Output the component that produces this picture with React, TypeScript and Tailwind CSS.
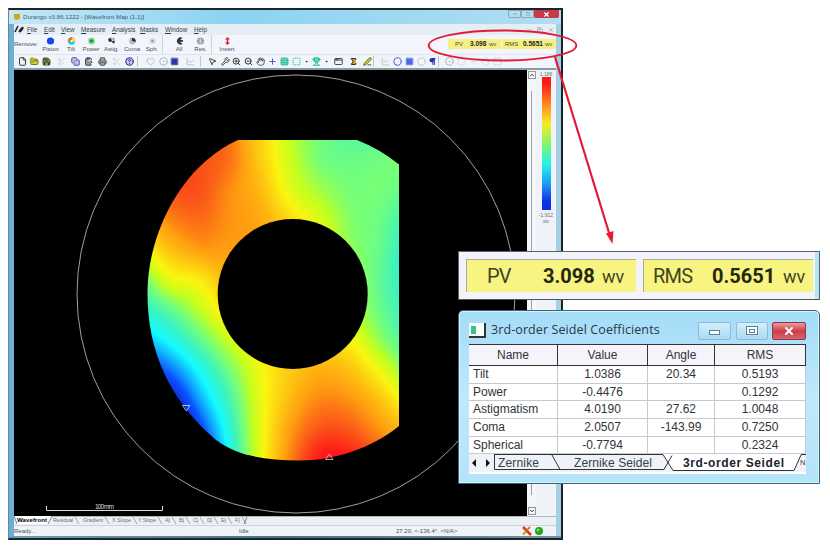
import React from "react";
import {
  File, FolderOpen, Save, Scissors, Copy, ClipboardPaste, Printer, HelpCircle, Circle, Square,
  MousePointer2, Wrench, ZoomIn, ZoomOut, Hand, Plus, Table, SquareDashed, Dot, AppWindow,
  Sigma, PenLine, Heart, Pilcrow, ChevronDown, Trophy, ChartLine, X, Minus, CircleDot,
} from "lucide-react";

const FIELD = [
  [5.6, 5.6, 5.6, 5.3, 4.4, 3.5, 3.0, 2.7, 2.8, 3.1],
  [5.6, 5.6, 5.6, 5.35, 4.5, 3.6, 3.0, 2.9, 2.95, 3.1],
  [5.5, 5.6, 5.6, 5.15, 4.7, 3.8, 3.3, 3.0, 3.0, 2.8],
  [4.7, 5.2, 5.4, 5.1, 4.9, 4.3, 3.7, 3.1, 2.9, 2.5],
  [3.9, 4.6, 5.0, 5.0, 5.0, 4.4, 3.9, 3.2, 2.85, 2.3],
  [2.9, 3.8, 4.1, 4.8, 5.0, 4.5, 4.0, 3.4, 2.8, 2.3],
  [2.3, 2.8, 3.5, 4.3, 4.8, 4.5, 4.0, 3.5, 2.9, 2.4],
  [1.6, 2.1, 2.8, 3.6, 4.2, 4.4, 4.3, 4.0, 3.2, 2.6],
  [0.5, 1.2, 2.1, 3.0, 3.9, 4.5, 4.8, 4.6, 3.9, 3.0],
  [-0.8, 0.1, 1.5, 2.6, 3.8, 4.7, 5.2, 5.1, 4.6, 3.8],
  [-2, -1, 0.8, 2.3, 3.8, 5.0, 5.6, 5.55, 5.1, 4.6],
  [-2, -1, 0.4, 2.1, 3.8, 5.2, 6, 6, 5.6, 4.9],
  [-2, -1, 0.2, 2.0, 3.8, 5.2, 6, 6, 5.6, 5],
];
const STOPS: [number, number, number, number][] = [
  [0, 10, 20, 190], [1, 10, 80, 255], [2, 20, 250, 255], [2.5, 60, 243, 190], [3, 118, 255, 120],
  [3.5, 195, 255, 30], [4, 250, 245, 16], [5, 255, 160, 16], [5.6, 250, 82, 24], [6, 255, 24, 24],
];
const clamp = (v: number, a: number, b: number) => Math.max(a, Math.min(b, v));
function cubic(a: number, b: number, c: number, d: number, t: number) {
  return b + 0.5 * t * (c - a + t * (2 * a - 5 * b + 4 * c - d + t * (3 * (b - c) + d - a)));
}
function sample(gx: number, gy: number) {
  const ix = Math.floor(gx), iy = Math.floor(gy);
  const row = (r: number) => {
    const R = FIELD[clamp(r, 0, 12)];
    return cubic(R[clamp(ix - 1, 0, 9)], R[clamp(ix, 0, 9)], R[clamp(ix + 1, 0, 9)], R[clamp(ix + 2, 0, 9)], gx - ix);
  };
  return cubic(row(iy - 1), row(iy), row(iy + 1), row(iy + 2), gy - iy);
}
function color(v: number) {
  const t = clamp(v, 0, 6);
  let i = 0;
  while (i < STOPS.length - 2 && STOPS[i + 1][0] < t) i++;
  const a = STOPS[i], b = STOPS[i + 1], f = (t - a[0]) / (b[0] - a[0]);
  return `rgb(${[1, 2, 3].map((k) => Math.round(a[k] + (b[k] - a[k]) * f)).join(",")})`;
}
const CELLS: { x: number; y: number; c: string }[] = [];
for (let y = 138; y < 464; y += 2)
  for (let x = 144; x < 402; x += 2) CELLS.push({ x, y, c: color(sample((x + 1 - 140) / 30, (y + 1 - 130) / 30)) });

function WavefrontMap() {
  return (
    <svg width="513" height="446" viewBox="14 70 513 446" className="block shrink-0 bg-black">
      <defs>
        <clipPath id="aperture">
          <path d="M238 140H357Q380 149 399 164.500V426C372 448 334 461 298 460.500C265 460 237 456 216 440C170 401 147.500 352 147.500 293C147.500 233 182 165 238 140Z" />
        </clipPath>
      </defs>
      <g clipPath="url(#aperture)" shapeRendering="crispEdges">
        {CELLS.map((p, i) => <rect key={i} x={p.x} y={p.y} width="2" height="2" fill={p.c} />)}
      </g>
      <circle cx="292.700" cy="294" r="75" fill="#000" />
      <circle cx="296" cy="294" r="219" fill="none" stroke="#c8c8c8" strokeWidth=".8" />
      <path d="M182.500 405.500H190L186.300 411Z" fill="none" stroke="#d8d8ff" strokeWidth=".8" />
      <path d="M325.500 459.500H333L329.300 454Z" fill="none" stroke="#ffc0c0" strokeWidth=".8" />
      <path d="M46.500 506V510.500H162.500V506" fill="none" stroke="#ddd" strokeWidth="1" />
      <text x="95" y="508.500" fontSize="6.500" textLength="19" fill="#ddd" fontFamily="Liberation Sans">100 mm</text>
    </svg>
  );
}

const MENU: [string, string][] = [
  ["File", "w-[17px]"], ["Edit", "w-[17px]"], ["View", "w-[20px]"], ["Measure", "w-[31px]"],
  ["Analysis", "w-[28px]"], ["Masks", "w-[25px]"], ["Window", "w-[29px]"], ["Help", "w-[20px]"],
];

function RemoveIcon({ kind }: { kind: string }) {
  return (
    <svg width="9" height="8" viewBox="0 0 9 8" className="block">
      {kind === "Piston" && <circle cx="4.500" cy="4" r="3.600" fill="#1745ee" />}
      {kind === "Tilt" && (<>
        <circle cx="4.500" cy="4" r="3.700" fill="#28c9ee" />
        <path d="M4.500 4L1 5A3.700 3.700 0 0 1 5.500 .4Z" fill="#ff6a28" />
        <path d="M4.500 4L5.500 .4A3.700 3.700 0 0 1 8 5Z" fill="#ffe033" />
        <circle cx="4.500" cy="4" r="1" fill="#fff" />
      </>)}
      {kind === "Power" && (<>
        <circle cx="4.500" cy="4" r="3.700" fill="#b5e88e" /><circle cx="4.500" cy="4" r="2.500" fill="#3fc088" /><circle cx="4.500" cy="4" r="1.100" fill="#176a80" />
      </>)}
      {kind === "Astig." && (<><path d="M1 2L4 .5L5 4L8 3.500L7 7L4.500 4.500L2 5Z" fill="#333" /><circle cx="6.500" cy="2" r="1.200" fill="#999" /></>)}
      {kind === "Coma" && (<><circle cx="4.500" cy="4" r="3.400" fill="#bbb" /><path d="M4 1A3 3 0 0 1 7.500 5L4 4Z" fill="#333" /></>)}
      {kind === "Sph." && (<><circle cx="4.500" cy="4" r="3.200" fill="#ddd" /><circle cx="4.500" cy="4" r="1.300" fill="#999" /></>)}
      {kind === "All" && <path d="M7.500 1A3.600 3.600 0 1 0 7.500 7L5 4.800H8V3H5Z" fill="#333" />}
      {kind === "Res." && (<><circle cx="4.500" cy="4" r="3.600" fill="#999" /><path d="M2 2L7 6M7 2L2 6M4.500 .5V7.500" stroke="#ddd" strokeWidth=".7" /></>)}
      {kind === "Invert" && <path d="M4.500 0L7 2.500H5.300V5.500H7L4.500 8L2 5.500H3.700V2.500H2Z" fill="#e5173f" />}
    </svg>
  );
}
const REMOVE: [string, string][] = [
  ["Piston", "w-[21px]"], ["Tilt", "w-[20px]"], ["Power", "w-[20px]"], ["Astig.", "w-[21px]"], ["Coma", "w-[20px]"],
  ["Sph.", "w-[20px]"], ["|", "w-[6px]"], ["All", "w-[22px]"], ["Res.", "w-[21px]"], ["|", "w-[5px]"], ["Invert", "w-[22px]"],
];

type Tool = [React.ComponentType<any> | null, string, string, string?];
const TOOLS: Tool[] = [
  [File, "w-[11px]", "#333"], [FolderOpen, "w-[12px]", "#6b7b12", "#d5cd3c"], [Save, "w-[13px]", "#2b361b", "#8b9b50"],
  [Scissors, "w-[16px]", "#d3d8e0"], [Copy, "w-[12px]", "#554ba0", "#c5c0ee"], [ClipboardPaste, "w-[14px]", "#3f367f", "#a09a70"],
  [Printer, "w-[15px]", "#555", "#aaa"], [Scissors, "w-[12px]", "#d3d8e0"], [HelpCircle, "w-[15px]", "#26207d", "#c9c8f2"],
  [null, "w-[7px]", ""], [Heart, "w-[13px]", "#b8bfca"], [CircleDot, "w-[12px]", "#a9b2c8"], [Square, "w-[11px]", "#777fa5", "#2f34b5"],
  [ChartLine, "w-[20px]", "#b8bfca"], [null, "w-[5px]", ""], [MousePointer2, "w-[14px]", "#444"], [Wrench, "w-[12px]", "#444"],
  [ZoomIn, "w-[11px]", "#333"], [ZoomOut, "w-[12px]", "#333"], [Hand, "w-[12px]", "#555"], [Plus, "w-[12px]", "#4754cf"],
  [Table, "w-[12px]", "#29b59b", "#6de0ca"], [SquareDashed, "w-[12px]", "#20bca2", "#80e5d7"], [Dot, "w-[9px]", "#222", "#222"],
  [Trophy, "w-[10px]", "#22b998", "#5cdaba"], [Dot, "w-[10px]", "#222", "#222"], [AppWindow, "w-[14px]", "#3e4565"],
  [Sigma, "w-[16px]", "#3a1919", "#cfa530"], [PenLine, "w-[12px]", "#505a09", "#d5e229"], [null, "w-[6px]", ""],
  [ChartLine, "w-[12px]", "#bcc4cd"], [Circle, "w-[13px]", "#4b5cc8"], [Square, "w-[11px]", "#8a94ec", "#5063eb"],
  [Circle, "w-[12px]", "#c4cad4"], [Pilcrow, "w-[11px]", "#2430b7", "#2430b7"], [null, "w-[5px]", ""],
  [CircleDot, "w-[12px]", "#adb4bf"], [Square, "w-[12px]", "#d8dee6"], [Plus, "w-[12px]", "#d8dee6"], [Circle, "w-[12px]", "#d8dee6"], [Square, "w-[12px]", "#d0d6df"],
];

function Readout({ small }: { small?: boolean }) {
  if (small)
    return (
      <div className="mt-[4px] flex h-[10px] w-[108px] shrink-0 gap-px text-[6px] leading-[10px] text-[#4e4e28]">
        <div className="flex w-[53px] items-center bg-[#f4f084] pl-[7px]"><span className="w-[15px]">PV</span><b className="w-[19px] text-[6.5px] text-[#222]">3.098</b><span>wv</span></div>
        <div className="flex w-[54px] items-center bg-[#f4f084] pl-[3px]"><span className="w-[18px]">RMS</span><b className="w-[22px] text-[6.5px] text-[#222]">0.5651</b><span>wv</span></div>
      </div>
    );
  return (
    <div className="absolute left-[458px] top-[251px] flex h-[49px] w-[362px] border border-[#59626a] border-b-[#555] bg-[#f2f4fa] pl-[7px] pt-[7px] font-['Roboto',sans-serif] text-[20px] leading-[31px] text-[#42441f] shadow-[inset_-4px_0_0_#b7e4f6]">
      <div className="flex h-[33px] w-[170px] items-center border-l border-t border-[#aaa] bg-[#f7f482]">
        <span className="ml-[20px] w-[56px] tracking-[-.8px]">PV</span><b className="w-[59px] text-[#25270f]">3.098</b><span className="text-[18px]">wv</span>
      </div>
      <div className="ml-[7px] flex h-[33px] w-[170px] items-center border-l border-t border-[#aaa] bg-[#f7f482]">
        <span className="ml-[9px] w-[59px] tracking-[-.8px]">RMS</span><b className="w-[71px] text-[#25270f]">0.5651</b><span className="text-[18px]">wv</span>
      </div>
    </div>
  );
}

const ROWS = [
  ["Tilt", "1.0386", "20.34", "0.5193"], ["Power", "-0.4476", "", "0.1292"], ["Astigmatism", "4.0190", "27.62", "1.0048"],
  ["Coma", "2.0507", "-143.99", "0.7250"], ["Spherical", "-0.7794", "", "0.2324"],
];

function SeidelWindow() {
  return (
    <div className="absolute left-[458px] top-[310px] flex h-[174px] w-[362px] flex-col rounded-t-[5px] border border-[#3d6473] bg-gradient-to-b from-[#a4dcf8] via-[#bfe8fb] to-[#b4e4fa] pl-[10px] pr-[13px] shadow-[inset_0_0_0_1px_#d4f2ff]">
      <div className="flex h-[33px] shrink-0 items-center pt-[6px]">
        <div className="flex h-[15px] w-[17px] items-center border-b-2 border-r-2 border-[#333] bg-[#f8fff8] pl-[2px]"><div className="h-[8px] w-[5px] bg-[#40bf8a]" /></div>
        <span className="ml-[5px] w-[208px] whitespace-nowrap font-['Open_Sans',sans-serif] text-[12.500px] tracking-[.1px] text-[#263847]">3rd-order Seidel Coefficients</span>
        <div className="flex h-[18px] w-[33px] items-center justify-center rounded-[2px] border border-[#8ebbd3] bg-gradient-to-b from-[#d3effc] to-[#a9dbf4]"><div className="mt-[3px] h-[5px] w-[11px] border border-[#617f93] bg-white" /></div>
        <div className="ml-[5px] flex h-[18px] w-[32px] items-center justify-center rounded-[2px] border border-[#8ebbd3] bg-gradient-to-b from-[#d3effc] to-[#a9dbf4]"><div className="flex h-[9px] w-[12px] items-center justify-center border border-[#617f93] bg-white"><div className="h-[4px] w-[6px] border border-[#617f93]" /></div></div>
        <div className="ml-[4px] flex h-[18px] w-[34px] shrink-0 items-center justify-center rounded-[2px] border border-[#8c3944] bg-gradient-to-b from-[#eb9b9d] via-[#cc3d48] to-[#d9626b]"><X size={12} strokeWidth={4} color="#fff" /></div>
      </div>
      <div className="flex h-[130px] w-[337px] shrink-0 flex-col bg-white text-[12px] text-[#303438]">
        <div className="grid h-[22px] shrink-0 grid-cols-[89px_90px_67px_91px] border-b border-t border-[#333] bg-[#f4f4fa] text-center leading-[21px]">
          {["Name", "Value", "Angle", "RMS"].map((h) => <div key={h} className="border-r border-[#333]">{h}</div>)}
        </div>
        {ROWS.map((r) => (
          <div key={r[0]} className="grid h-[17.700px] shrink-0 grid-cols-[89px_90px_67px_91px] border-b border-[#c6cad0] text-center leading-[17px]">
            {r.map((c, i) => <div key={i} className={i ? "border-r border-[#c6cad0]" : "border-r border-[#c6cad0] pl-[4px] text-left"}>{c}</div>)}
          </div>
        ))}
        <svg width="337" height="18" viewBox="0 0 337 18" className="block shrink-0 font-['Liberation_Sans',sans-serif]">
          <rect width="337" height="18" fill="#eff2f8" />
          <path d="M194 0L204 17H325L332 0Z" fill="#fff" />
          <path d="M7 5L3 9L7 13ZM17 5L21 9L17 13Z" fill="#111" />
          <path d="M25.500 1V15.500H92M83 1L91 15.500H195L203 1.500M194 .5L204 16.500H325L332 1M25 .5H194M332 .5H337" fill="none" stroke="#333" />
          <g fontSize="12" fill="#38404a">
            <text x="29" y="12.500" textLength="41">Zernike</text><text x="105" y="12.500" textLength="78">Zernike Seidel</text>
            <text x="214" y="12.500" textLength="101" fontWeight="bold" fill="#20242a">3rd-order Seidel</text><text x="331" y="11" fontSize="7.500">N</text>
          </g>
        </svg>
      </div>
    </div>
  );
}

const TABS: [string, number, number][] = [["Residual", 53, 20], ["Gradient", 83, 20], ["X Slope", 112, 19], ["Y Slope", 138, 18], ["A)", 165, 5], ["B)", 179, 5], ["C)", 193, 5], ["D)", 207, 5], ["E)", 221, 5], ["F)", 235, 5]];

export default function App() {
  return (
    <div className="relative h-[548px] w-[830px] overflow-hidden bg-white font-['Liberation_Sans',Arial,sans-serif]">
      <div className="flex h-[548px] pl-[8px] pt-[8px]">
        <div className="flex h-[532px] w-[555px] flex-col border-b-2 border-r-2 border-t-2 border-[#17252d] border-l border-l-[#668796] bg-gradient-to-r from-[#6baed6] via-[#b8d7e5] to-[#a5cfe2] pl-[5px] pr-[5px]">
          <div className="-ml-[5px] -mr-[5px] flex h-[14px] shrink-0 items-center bg-gradient-to-r from-[#c6e6f4] via-[#8bd3f2] via-40% to-[#b1def1] pl-[5px]">
            <div className="h-[6px] w-[6px] rounded-b-[3px] bg-[#c9a91c]" />
            <span className="ml-[3px] w-[470px] whitespace-nowrap text-[6.200px] text-[#3c5e72]">Durango v3.86.1222 - [Wavefront Map (1,1)]</span>
            <div className="ml-[15px] flex h-[8px] w-[51px] shrink-0 self-start">
              <div className="flex w-[13px] items-center justify-center rounded-b-[2px] border border-[#86aabf] bg-[#b8dced]"><Minus size={6} color="#597382" /></div>
              <div className="flex w-[13px] items-center justify-center border border-[#86aabf] bg-[#b8dced]"><Square size={4} color="#597382" /></div>
              <div className="flex w-[25px] items-center justify-center rounded-b-[2px] bg-[#c83a4a]"><X size={7} strokeWidth={4} color="#fff" /></div>
            </div>
          </div>
          <div className="flex h-[11px] shrink-0 items-center bg-[#e5edf5] text-[6.300px] text-[#34404b]">
            <svg width="13" height="9" viewBox="0 0 13 9"><path d="M1 7L4 1M5 7C9 0 11 2 6 7" fill="none" stroke="#222" strokeWidth="1.600" /></svg>
            {MENU.map(([m, w]) => <span key={m} className={`${w} shrink-0`}><u>{m[0]}</u>{m.slice(1)}</span>)}
            <div className="ml-auto flex gap-[5px] pr-[2px] text-[#768391]"><Minus size={6} /><Copy size={6} /><X size={6} /></div>
          </div>
          <div className="flex h-[19px] shrink-0 bg-[#f2f5fb] text-[6px] text-[#46505a]">
            <span className="w-[26px] shrink-0 pt-[5px] text-[6px]">Remove:</span>
            {REMOVE.map(([m, w], i) => m === "|" ? <div key={i} className={`${w} border-l border-[#cbd3dd]`} /> : (
              <div key={i} className={`${w} flex shrink-0 flex-col items-center pt-[2px] leading-[8px]`}><RemoveIcon kind={m} /><span>{m}</span></div>
            ))}
            <div className="grow" />
            <Readout small />
          </div>
          <div className="flex h-[14px] shrink-0 items-center border-t border-[#e0e6ed] bg-[#f1f4f9] pl-[3px]">
            {TOOLS.map(([Icon, w, c, fill], i) => Icon ? (
              <div key={i} className={`${w} flex shrink-0 justify-center`}><Icon size={9} color={c} fill={fill || "none"} strokeWidth={2.6} /></div>
            ) : <div key={i} className={`${w} h-[11px] shrink-0 border-l border-[#bdc7d2]`} />)}
          </div>
          <div className="h-[2px] shrink-0 bg-[#8b9ba6]" />
          <div className="flex h-[446px] shrink-0">
            <WavefrontMap />
            <div className="flex w-[9px] shrink-0 flex-col items-center justify-between bg-[#f5f6fa] py-px">
              <div className="flex h-[8px] w-[8px] items-center justify-center border border-[#999]"><ChevronDown className="rotate-180" size={6} strokeWidth={4} color="#333" /></div>
              <div className="my-[12px] w-px grow bg-[#9ba2aa]" />
              <div className="flex h-[8px] w-[8px] items-center justify-center border border-[#999]"><ChevronDown size={6} strokeWidth={4} color="#333" /></div>
            </div>
            <div className="flex grow flex-col items-center bg-[#eff3f9] text-[5px] leading-[6px] text-[#68727d]">
              <span className="mt-px">1.186</span>
              <div className="h-[133px] w-[9px] shrink-0 bg-[linear-gradient(#f91c16_5%,#ff851e_20%,#f7ed22_35%,#7df46d_51%,#22f1eb_66%,#1f9cf4_80%,#102ee2_94%)]" />
              <span className="mt-[2px]">-1.912</span><span>wv</span>
            </div>
          </div>
          <svg width="542" height="9" viewBox="14 516 542 9" className="block shrink-0">
            <rect x="14" y="516" width="544" height="9" fill="#eceff4" /><path d="M14 516L17 524H48L52 516Z" fill="#fff" />
            <path d="M14 516L17 524M48 524L52 516H558" fill="none" stroke="#59636d" strokeWidth=".8" />
            <text x="17" y="522.300" fontSize="6" fontWeight="bold" textLength="30">Wavefront</text>
            {TABS.map(([t, x, w]) => <g key={t}><text x={x} y="522.300" fontSize="5.500" fill="#6c747c" textLength={w}>{t}</text><path d={`M${x + w + 2} 517L${x + w + 6} 524`} stroke="#7e8890" strokeWidth=".7" /></g>)}
            <path d="M247 517L244 524" stroke="#59636d" strokeWidth=".8" />
          </svg>
          <div className="flex h-[11px] shrink-0 items-center border-t border-[#cbd3db] bg-[#eff3f9] text-[6px] text-[#49535c]">
            <span className="w-[225px]">Ready...</span><span className="w-[157px]">Idle</span><span className="w-[126px]">27.20, &lt;-136.4°, &lt;N/A&gt;</span>
            <svg width="24" height="10" viewBox="0 0 24 10"><path d="M1 1L9 9" stroke="#d83b1c" strokeWidth="2.500" /><path d="M8 1L5 4" stroke="#e0703a" strokeWidth="1.800" /><path d="M1 8.500L4 5.500" stroke="#bda31d" strokeWidth="2" /><circle cx="17" cy="5" r="4" fill="#20a51c" /><circle cx="16" cy="4" r="1.500" fill="#76d867" /></svg>
          </div>
          <div className="-mx-[5px] grow bg-gradient-to-r from-[#6f9eb3] via-[#477481] to-[#71939f]" />
        </div>
      </div>
      <svg width="830" height="548" viewBox="0 0 830 548" className="pointer-events-none absolute left-0 top-0">
        <ellipse cx="502.500" cy="45.500" rx="73.800" ry="15" fill="none" stroke="#e11b35" strokeWidth="1.900" />
        <path d="M555 57L610 236" stroke="#e11b35" strokeWidth="2.200" /><path d="M606 233.500L613.500 231L612.500 244Z" fill="#e11b35" />
      </svg>
      <Readout />
      <SeidelWindow />
    </div>
  );
}
